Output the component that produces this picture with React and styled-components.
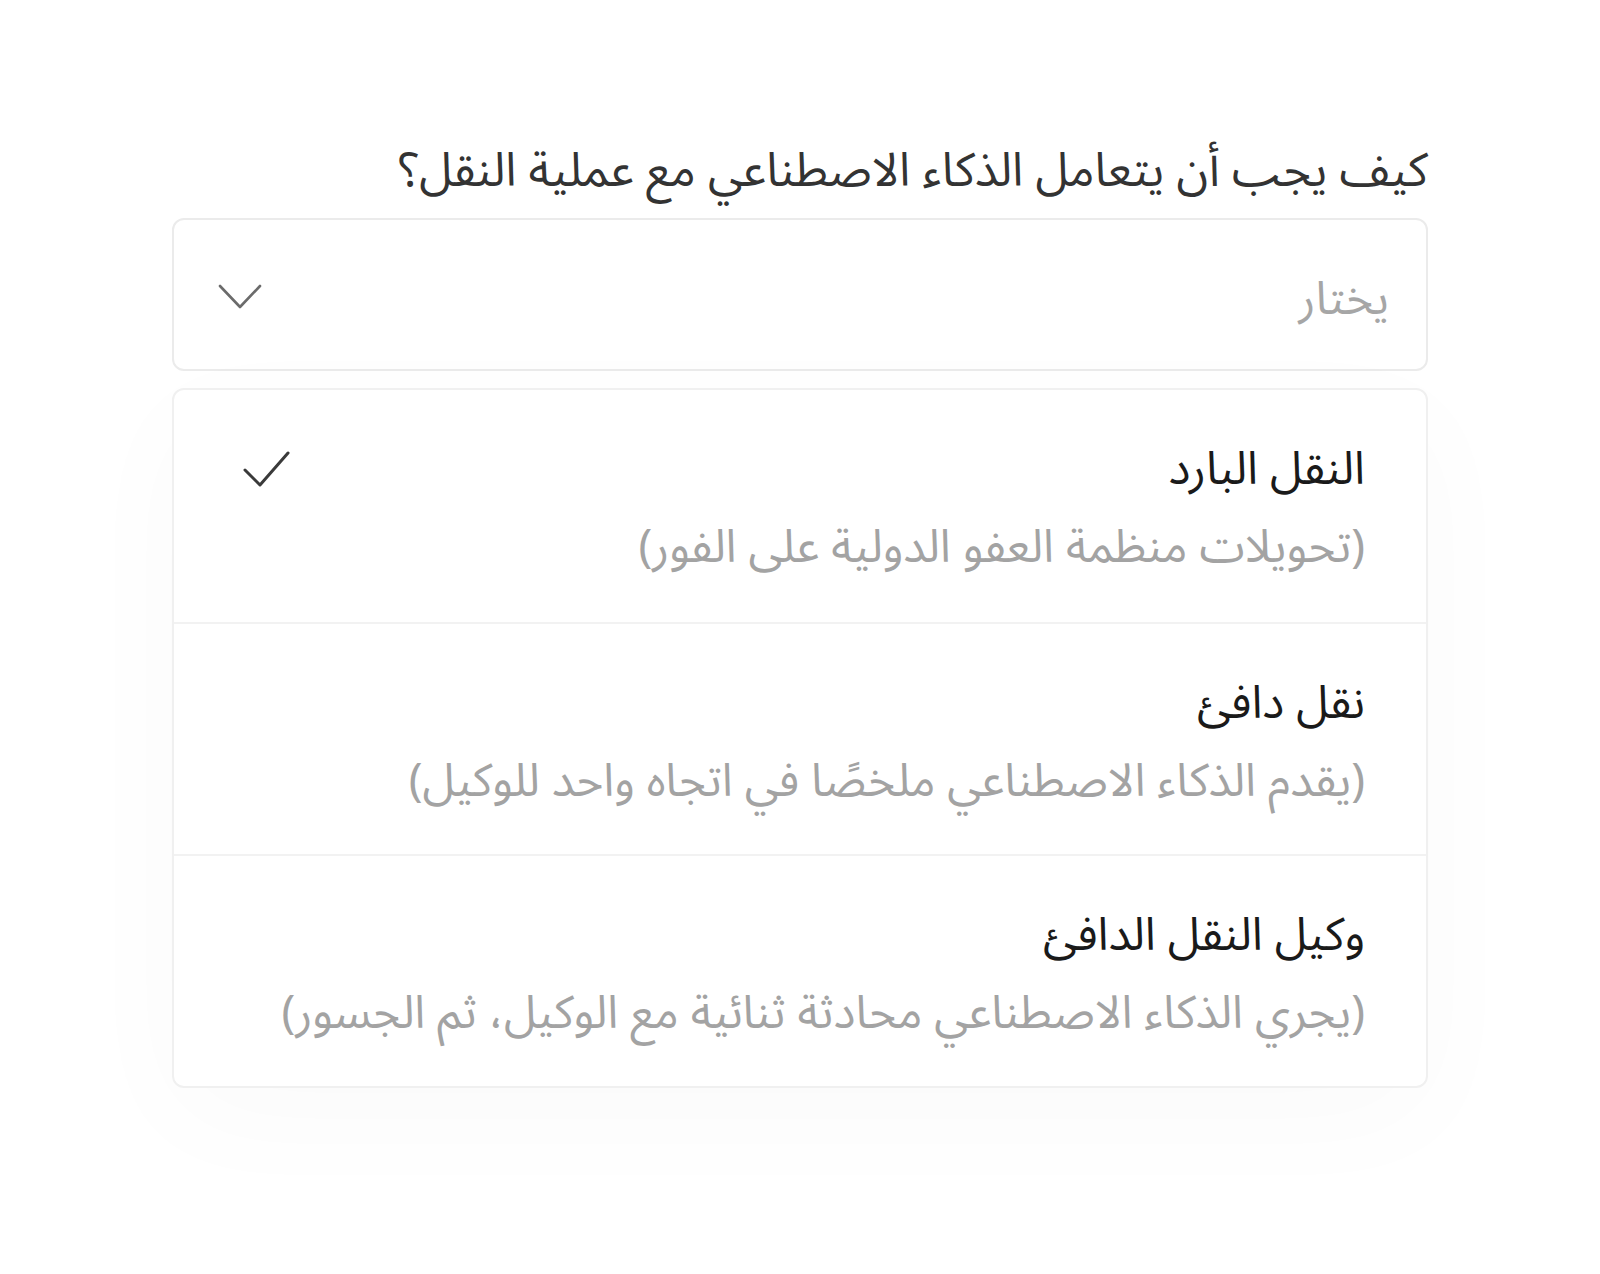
import React from "react";
import styled, { createGlobalStyle } from "styled-components";

const Global = createGlobalStyle`
  html, body {
    margin: 0;
    padding: 0;
    background: #ffffff;
  }
  body {
    font-family: "Noto Sans Arabic", "Noto Sans", "DejaVu Sans", sans-serif;
  }
`;

const Page = styled.div`
  min-height: 1274px;
  padding-top: 138px;
  box-sizing: border-box;
`;

const Field = styled.div`
  width: 1256px;
  margin: 0 auto;
  direction: rtl;
`;

const Label = styled.div`
  font-size: 47px;
  line-height: 66px;
  color: #333333;
  margin-bottom: 14px;
  white-space: nowrap;
`;

const SelectBox = styled.div`
  height: 153px;
  box-sizing: border-box;
  border: 2px solid #ebebeb;
  border-radius: 12px;
  display: flex;
  align-items: center;
  justify-content: space-between;
  padding: 0 37px 0 44px;
  background: #fff;
`;

const Placeholder = styled.span`
  font-size: 46px;
  color: #a6a6a6;
  line-height: 1;
  padding-top: 10px;
`;

const Chevron = styled.svg`
  width: 44px;
  height: 26px;
  flex: none;
  margin-top: 4px;
`;

const Menu = styled.div`
  margin-top: 17px;
  border: 2px solid #f0f0f0;
  border-radius: 12px;
  background: #fff;
  box-shadow: 0 30px 120px rgba(0, 0, 0, 0.022);
  overflow: hidden;
`;

const Option = styled.div`
  position: relative;
  height: 232px;
  box-sizing: border-box;
  display: flex;
  align-items: flex-start;
  justify-content: space-between;
  padding: 41px 61px 0 68px;
  border-top: ${(p) => (p.$first ? "none" : "2px solid #f2f2f2")};
`;

const OptionText = styled.div`
  flex: 1;
  min-width: 0;
  display: flex;
  flex-direction: column;
  white-space: nowrap;
`;

const OptionTitle = styled.div`
  font-size: 46px;
  line-height: 78px;
  color: #1a1a1a;
`;

const OptionNote = styled.div`
  font-size: 46px;
  line-height: 78px;
  color: #a3a3a3;
`;

const Check = styled.svg`
  width: 50px;
  height: 38px;
  flex: none;
  margin-top: 19px;
`;

const options = [
  {
    title: "النقل البارد",
    note: "(تحويلات منظمة العفو الدولية على الفور)",
    selected: true,
  },
  {
    title: "نقل دافئ",
    note: "(يقدم الذكاء الاصطناعي ملخصًا في اتجاه واحد للوكيل)",
  },
  {
    title: "وكيل النقل الدافئ",
    note: "(يجري الذكاء الاصطناعي محادثة ثنائية مع الوكيل، ثم الجسور)",
  },
];

export default function App() {
  return (
    <>
      <Global />
      <Page>
        <Field>
          <Label>كيف يجب أن يتعامل الذكاء الاصطناعي مع عملية النقل؟</Label>
          <SelectBox>
            <Placeholder>يختار</Placeholder>
            <Chevron viewBox="0 0 44 26" fill="none">
              <path
                d="M2 2 L22 23 L42 2"
                stroke="#6b6b6b"
                strokeWidth="2.6"
                strokeLinecap="round"
                strokeLinejoin="round"
              />
            </Chevron>
          </SelectBox>
          <Menu>
            {options.map((o, i) => (
              <Option key={o.title} $first={i === 0}>
                <OptionText>
                  <OptionTitle>{o.title}</OptionTitle>
                  <OptionNote>{o.note}</OptionNote>
                </OptionText>
                {o.selected && (
                  <Check viewBox="0 0 50 38" fill="none">
                    <path
                      d="M3 20 L18 35 L46 3"
                      stroke="#3a3a3a"
                      strokeWidth="3"
                      strokeLinecap="round"
                      strokeLinejoin="round"
                    />
                  </Check>
                )}
              </Option>
            ))}
          </Menu>
        </Field>
      </Page>
    </>
  );
}
